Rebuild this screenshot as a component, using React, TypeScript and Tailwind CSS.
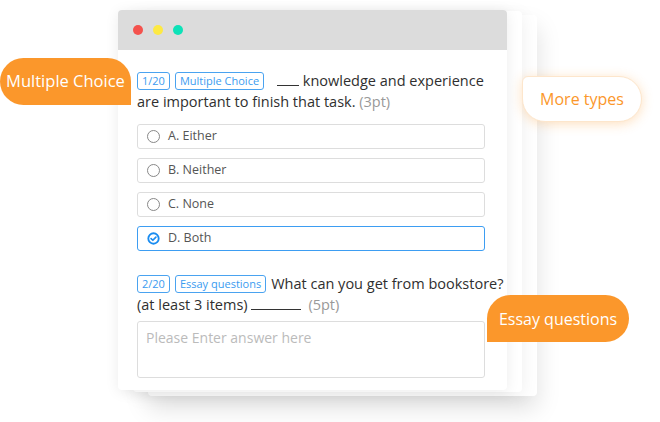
import React from "react";

const Tag = ({ children }: { children: React.ReactNode }) => (
  <span className="inline-block align-[1px] rounded-[3px] border border-[#4aa3f0] px-[4px] text-[11px] leading-[16px] text-[#3a9bf0] mr-[5px]">
    {children}
  </span>
);

const Blank = ({ w }: { w: string }) => (
  <span className={`inline-block h-[1px] bg-[#333] align-baseline ${w}`} />
);

const CheckCircle = () => (
  <svg width="13" height="13" viewBox="0 0 14 14" fill="none">
    <circle cx="7" cy="7" r="5.6" stroke="#1a8cf0" strokeWidth="2" />
    <path d="M4.4 7.1 L6.3 8.9 L9.6 5.5" stroke="#1a8cf0" strokeWidth="1.8" strokeLinecap="round" strokeLinejoin="round" />
  </svg>
);

const Option = ({ label, checked }: { label: string; checked?: boolean }) => (
  <div
    className={`flex h-[25px] items-center gap-[8px] rounded-[3px] border bg-white pl-[9px] text-[12.5px] text-[#555] ${
      checked ? "border-[#3d9df2]" : "border-[#ddd]"
    }`}
  >
    {checked ? (
      <CheckCircle />
    ) : (
      <span className="h-[13px] w-[13px] rounded-full border border-[#888]" />
    )}
    <span>{label}</span>
  </div>
);

export default function App() {
  return (
    <div
      className="relative h-[422px] w-[660px] overflow-hidden bg-white"
      style={{ fontFamily: "'Open Sans', 'Noto Sans', sans-serif" }}
    >
      {/* stacked cards behind */}
      <div className="absolute left-[148px] top-[15px] h-[381px] w-[389px] rounded bg-white shadow-[0_12px_24px_rgba(0,0,0,0.13)]" />
      <div className="absolute left-[133px] top-[11px] h-[381px] w-[389px] rounded bg-white shadow-[0_4px_18px_rgba(0,0,0,0.07)]" />

      <div className="relative pl-[118px] pt-[10px]">
        <div className="h-[380px] w-[389px] overflow-hidden rounded-[4px] bg-white shadow-[0_2px_14px_rgba(0,0,0,0.08)]">
          <div className="flex h-[40px] items-center gap-[10px] bg-[#dcdcdc] pl-[15px]">
            <span className="h-[10px] w-[10px] rounded-full bg-[#f4524d]" />
            <span className="h-[10px] w-[10px] rounded-full bg-[#fde943]" />
            <span className="h-[10px] w-[10px] rounded-full bg-[#0de2b8]" />
          </div>

          <div className="pl-[19px] pr-[22px]">
            <p className="-mr-[18px] whitespace-nowrap pt-[20px] text-[14.5px] leading-[21px] text-[#2f2f2f]">
              <Tag>1/20</Tag>
              <Tag>Multiple Choice</Tag>
              <span className="ml-[8px]" />
              <Blank w="w-[22px]" /> knowledge and experience
              <br />
              are important to finish that task. <span className="text-[#999]">(3pt)</span>
            </p>

            <div className="mt-[12px] flex flex-col gap-[9px]">
              <Option label="A. Either" />
              <Option label="B. Neither" />
              <Option label="C. None" />
              <Option label="D. Both" checked />
            </div>

            <p className="-mr-[18px] whitespace-nowrap pt-[22px] text-[14.5px] leading-[21px] text-[#2f2f2f]">
              <Tag>2/20</Tag>
              <Tag>Essay questions</Tag>
              What can you get from bookstore?
              <br />
              (at least 3 items) <Blank w="w-[50px]" />
              <span className="ml-[7px] text-[#999]">(5pt)</span>
            </p>

            <div className="mt-[6px] h-[57px] rounded-[3px] border border-[#ddd] px-[8px] pt-[5px] text-[14px] text-[#bbb]">
              Please Enter answer here
            </div>
          </div>
        </div>
      </div>

      {/* floating labels */}
      <div className="absolute left-0 top-[58px] flex h-[47px] w-[131px] items-center justify-center rounded-l-[24px] rounded-tr-[24px] bg-[#fb972b] text-[16.5px] text-white">
        Multiple Choice
      </div>
      <div className="absolute left-[522px] top-[76px] flex h-[46px] w-[120px] items-center justify-center rounded-r-[23px] rounded-bl-[23px] rounded-tl-[6px] border border-[#fde6cc] bg-white text-[16px] text-[#fb972b] shadow-[0_2px_12px_rgba(251,151,43,0.3)]">
        More types
      </div>
      <div className="absolute left-[487px] top-[295px] flex h-[47px] w-[142px] items-center justify-center rounded-r-[24px] rounded-tl-[24px] bg-[#fb972b] text-[16px] text-white">
        Essay questions
      </div>
    </div>
  );
}
